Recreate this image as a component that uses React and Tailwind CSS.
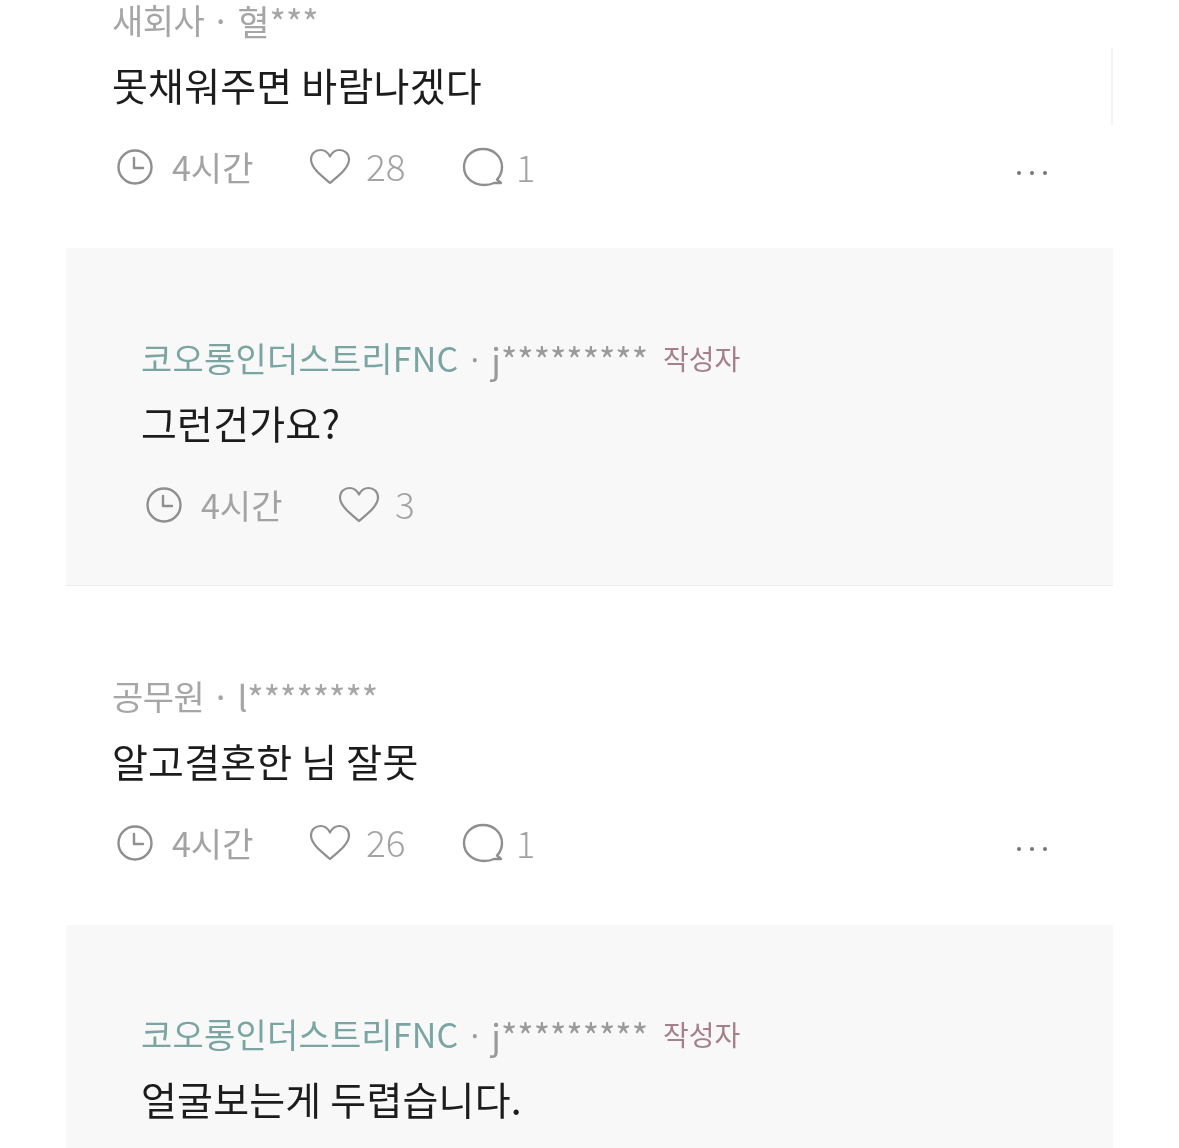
const FONT = "font-['Noto_Sans_CJK_KR','Noto_Sans',sans-serif]";

const ClockIcon = () => (
  <svg width="38" height="38" viewBox="0 0 38 38" fill="none" stroke="#8f8f8f" strokeWidth="2.4" strokeLinecap="round" strokeLinejoin="round">
    <circle cx="19" cy="19" r="16.5" />
    <path d="M18 10v10h9" />
  </svg>
);

const HeartIcon = () => (
  <svg width="42" height="38" viewBox="0 0 42 38" fill="none" stroke="#8f8f8f" strokeWidth="2.2" strokeLinejoin="round">
    <path d="M21 35C13 28 2 20 2 11.5 2 5.500 6.500 2 11.500 2 15.500 2 19 4.500 21 8.500 23 4.500 26.500 2 30.500 2 35.500 2 40 5.500 40 11.500 40 20 29 28 21 35Z" />
  </svg>
);

const BubbleIcon = () => (
  <svg width="42" height="40" viewBox="0 0 42 40" fill="none" stroke="#8f8f8f" strokeWidth="2.4" strokeLinecap="round" strokeLinejoin="round">
    <path d="M39 36h-7c-3 1.500-6.500 2-10 2C11 38 2 30.500 2 20 2 9.500 10.500 2 21 2s19 7.500 19 18c0 5-2 9.500-5 12.500z" />
  </svg>
);

const Meta = ({ likes, replies, hasMore }) => (
  <div className="flex items-center h-10 text-[#a3a3a3] text-[34px] leading-none">
    <div className="flex items-center w-[193px]">
      <ClockIcon />
      <span className="ml-[18px]">4시간</span>
    </div>
    <div className="flex items-center w-[153px]">
      <HeartIcon />
      <span className="ml-[15px] -mt-[3px] text-[37px] font-light">{likes}</span>
    </div>
    {replies != null && (
      <div className="flex items-center">
        <BubbleIcon />
        <span className="ml-[12px] -mt-[3px] text-[36px] font-light">{replies}</span>
      </div>
    )}
    {hasMore && (
      <div className="ml-auto mr-[66px] mt-[12px] flex gap-[9px]">
        <i className="block w-[4px] h-[4px] rounded-full bg-[#777]" />
        <i className="block w-[4px] h-[4px] rounded-full bg-[#777]" />
        <i className="block w-[4px] h-[4px] rounded-full bg-[#777]" />
      </div>
    )}
  </div>
);

const Comment = ({ job, user, text, likes, replies, className }) => (
  <section className={`pl-[46px] ${className}`}>
    <div className="flex items-center h-10 text-[34px] leading-none text-[#a6a6a6] whitespace-nowrap">
      <span className="tracking-[-0.5px]">{job}</span>
      <span className="mx-[7px]">·</span>
      <span className="text-[35px]">{user}</span>
    </div>
    <p className="mt-[24px] h-10 flex items-center text-[39px] leading-none tracking-[0.2px] text-[#1c1c1c] whitespace-nowrap">{text}</p>
    <div className="mt-[43px] pl-[4px]">
      <Meta likes={likes} replies={replies} hasMore />
    </div>
  </section>
);

const Reply = ({ text, likes, className }) => (
  <section className={`bg-[#f8f8f8] border-b border-[#ececec] pl-[75px] ${className}`}>
    <div className="flex items-center h-10 leading-none whitespace-nowrap">
      <span className="text-[34px] tracking-[0.2px] text-[#7aa5a3]">코오롱인더스트리FNC</span>
      <span className="mx-[8px] text-[30px] text-[#9c9c9c]">·</span>
      <span className="text-[35px] text-[#9a9a9a]">j*********</span>
      <span className="ml-[15px] text-[28px] text-[#a5808a]">작성자</span>
    </div>
    <p className="mt-[24px] h-10 flex items-center text-[39px] leading-none tracking-[0.2px] text-[#1c1c1c] whitespace-nowrap">{text}</p>
    {likes != null && (
      <div className="mt-[43px] pl-[4px]">
        <Meta likes={likes} />
      </div>
    )}
  </section>
);

export default function App() {
  return (
    <div className={`relative h-[1148px] w-[1179px] overflow-hidden bg-white ${FONT} blur-[0.7px]`}>
      <div className="absolute left-[1111px] top-[48px] h-[77px] w-[2px] bg-[#f4f4f4]" />
      <div className="pl-[66px] pr-[66px]">
        <Comment job="새회사" user="혈***" text="못채워주면 바람나겠다" likes={28} replies={1} className="pb-[61px]" />
        <Reply text="그런건가요?" likes={3} className="pt-[90px] pb-[60px]" />
        <Comment job="공무원" user="l********" text="알고결혼한 님 잘못" likes={26} replies={1} className="pt-[90px] pb-[62px]" />
        <Reply text="얼굴보는게 두렵습니다." className="pt-[89px] h-[240px]" />
      </div>
    </div>
  );
}
